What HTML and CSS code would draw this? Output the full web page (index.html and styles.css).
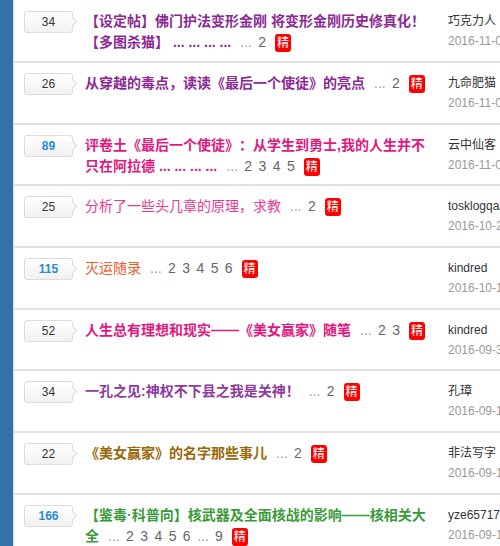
FILE: index.html
```html
<!DOCTYPE html>
<html lang="zh-CN">
<head>
<meta charset="utf-8">
<title>帖子列表</title>
<link rel="stylesheet" href="styles.css">
</head>
<body>
<div class="page">
  <div class="sidebar"></div>
  <div class="list">
    <div class="row">
      <div class="cnt"><span class="count">34</span></div>
      <div class="title"><a class="t purple b">【设定帖】佛门护法变形金刚 将变形金刚历史修真化！【多图杀猫】 <span class="ell">... ... ... ...</span></a><span class="pages"><span class="dots">...</span><a>2</a></span><span class="jing">精</span></div>
      <div class="author"><div class="name">巧克力人</div><div class="date">2016-11-08</div></div>
    </div>
    <div class="row">
      <div class="cnt"><span class="count">26</span></div>
      <div class="title"><a class="t purple b">从穿越的毒点，读读《最后一个使徒》的亮点</a><span class="pages"><span class="dots">...</span><a>2</a></span><span class="jing">精</span></div>
      <div class="author"><div class="name">九命肥猫</div><div class="date">2016-11-05</div></div>
    </div>
    <div class="row">
      <div class="cnt"><span class="count hot">89</span></div>
      <div class="title"><a class="t pink b">评卷土《最后一个使徒》：从学生到勇士,我的人生并不只在阿拉德 <span class="ell">... ... ... ...</span></a><span class="pages"><span class="dots">...</span><a>2</a><a>3</a><a>4</a><a>5</a></span><span class="jing">精</span></div>
      <div class="author"><div class="name">云中仙客</div><div class="date">2016-11-02</div></div>
    </div>
    <div class="row">
      <div class="cnt"><span class="count">25</span></div>
      <div class="title"><a class="t pink2">分析了一些头几章的原理，求教</a><span class="pages"><span class="dots">...</span><a>2</a></span><span class="jing">精</span></div>
      <div class="author"><div class="name">tosklogqaz</div><div class="date">2016-10-24</div></div>
    </div>
    <div class="row">
      <div class="cnt"><span class="count hot">115</span></div>
      <div class="title"><a class="t orange">灭运随录</a><span class="pages"><span class="dots">...</span><a>2</a><a>3</a><a>4</a><a>5</a><a>6</a></span><span class="jing">精</span></div>
      <div class="author"><div class="name">kindred</div><div class="date">2016-10-15</div></div>
    </div>
    <div class="row">
      <div class="cnt"><span class="count">52</span></div>
      <div class="title"><a class="t pink b">人生总有理想和现实——《美女赢家》随笔</a><span class="pages"><span class="dots">...</span><a>2</a><a>3</a></span><span class="jing">精</span></div>
      <div class="author"><div class="name">kindred</div><div class="date">2016-09-30</div></div>
    </div>
    <div class="row">
      <div class="cnt"><span class="count">34</span></div>
      <div class="title"><a class="t purple2 b">一孔之见:神权不下县之我是关神！</a><span class="pages"><span class="dots">...</span><a>2</a></span><span class="jing">精</span></div>
      <div class="author"><div class="name">孔璋</div><div class="date">2016-09-18</div></div>
    </div>
    <div class="row">
      <div class="cnt"><span class="count">22</span></div>
      <div class="title"><a class="t brown b">《美女赢家》的名字那些事儿</a><span class="pages"><span class="dots">...</span><a>2</a></span><span class="jing">精</span></div>
      <div class="author"><div class="name">非法写字</div><div class="date">2016-09-16</div></div>
    </div>
    <div class="row">
      <div class="cnt"><span class="count hot">166</span></div>
      <div class="title"><a class="t green b">【鉴毒·科普向】核武器及全面核战的影响——核相关大全</a><span class="pages"><span class="dots">...</span><a>2</a><a>3</a><a>4</a><a>5</a><a>6</a><span class="dots mid">...</span><a>9</a></span><span class="jing">精</span></div>
      <div class="author"><div class="name">yze6571788</div><div class="date">2016-09-12</div></div>
    </div>
  </div>
</div>
</body>
</html>
```
FILE: styles.css
```css
html, body {
  margin: 0;
  padding: 0;
  background: #fff;
}
body {
  width: 500px;
  height: 546px;
  overflow: hidden;
  font-family: "Liberation Sans", "Noto Sans CJK SC", sans-serif;
  font-size: 14px;
  color: #333;
  text-spacing-trim: space-all;
}
.page {
  display: flex;
  width: 640px;
  min-height: 546px;
}
.sidebar {
  width: 13px;
  flex: none;
  background: #3670a8;
  border-right: 1px solid #cfdcea;
}
.list {
  flex: 1;
  padding-top: 1.33px;
}
.row {
  display: grid;
  grid-template-columns: 61px 363px 140px;
  height: 61.67px;
  box-sizing: border-box;
  padding: 10px 0 0 10px;
  border-bottom: 2px solid #e1e1e1;
}
.cnt {
  position: relative;
}
.count {
  position: relative;
  display: block;
  width: 49px;
  height: 22px;
  box-sizing: border-box;
  border: 1px solid #dcdcdc;
  border-radius: 3px;
  background: linear-gradient(#ffffff, #f1f1f1);
  text-align: center;
  font-size: 12px;
  line-height: 20px;
  color: #333;
}
.count::after {
  content: "";
  position: absolute;
  right: -4px;
  top: 6px;
  width: 6px;
  height: 6px;
  background: #f8f8f8;
  border-top: 1px solid #dcdcdc;
  border-right: 1px solid #dcdcdc;
  transform: rotate(45deg);
}
.count.hot {
  color: #2b8bd6;
  font-weight: bold;
}
.title {
  padding-right: 15px;
  line-height: 21px;
  font-size: 14px;
}
.b { font-weight: bold; }
.purple { color: #8c2a94; }
.purple2 { color: #8e3a9e; }
.pink { color: #e2187f; }
.pink2 { color: #ea3a90; }
.orange { color: #f15a29; }
.brown { color: #9a6706; }
.green { color: #3a9a3a; }
.ell {
  font-family: "Liberation Sans", sans-serif;
}
.pages {
  margin-left: 9px;
  color: #666;
}
.pages a {
  margin-left: 6.4px;
}
.dots {
  color: #a09aa6;
}
.dots.mid {
  margin-left: 6.4px;
}
.jing {
  display: inline-block;
  width: 16px;
  height: 18px;
  margin-left: 9px;
  margin-top: 2px;
  border-radius: 3px;
  background: #ff0000;
  color: #fff;
  font-size: 12px;
  line-height: 18px;
  text-align: center;
  vertical-align: top;
}
.author {
  font-size: 12px;
}
.name {
  line-height: 21px;
  color: #333;
  white-space: nowrap;
}
.date {
  line-height: 18px;
  color: #999;
  white-space: nowrap;
}
```
